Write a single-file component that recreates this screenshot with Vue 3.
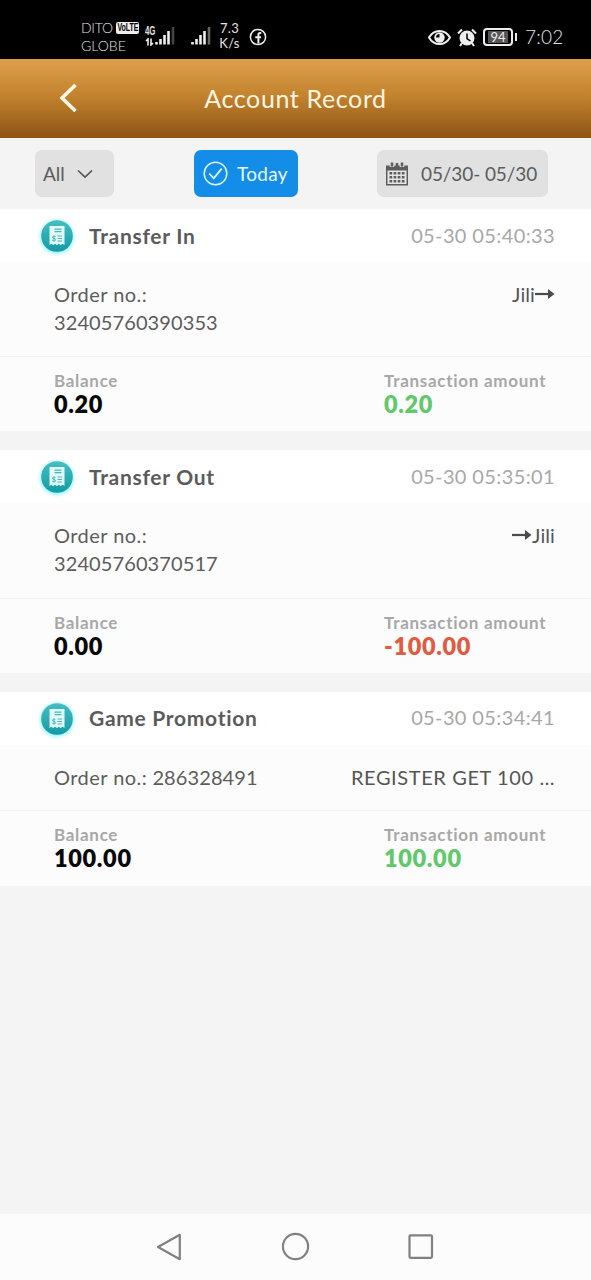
<script setup>
const records = [
  { title: 'Transfer In', time: '05-30 05:40:33', order: '32405760390353', wrap: true, detail: 'Jili', arrow: 'after', balance: '0.20', amount: '0.20', kind: 'gain', id: 'in' },
  { title: 'Transfer Out', time: '05-30 05:35:01', order: '32405760370517', wrap: true, detail: 'Jili', arrow: 'before', balance: '0.00', amount: '-100.00', kind: 'loss', id: 'out' },
  { title: 'Game Promotion', time: '05-30 05:34:41', order: '286328491', wrap: false, detail: 'REGISTER GET 100 …', arrow: '', balance: '100.00', amount: '100.00', kind: 'gain', id: 'promo' }
]
</script>

<template>
  <div class="screen">
    <div class="status">
      <div class="carrier">
        <div class="carrier-row"><span class="dito">DITO</span><span class="volte"><span>VoLTE</span></span></div>
        <div class="globe">GLOBE</div>
      </div>
      <div class="network">
        <span class="gen">4G</span>
        <svg class="updown" width="9" height="8" viewBox="0 0 9 8"><path d="M3 7.500V1L1 3M6 .5V7L8 5" fill="none" stroke="#eee" stroke-width="1.600" /></svg>
      </div>
      <svg class="signal" width="20" height="18" viewBox="0 0 20 18">
        <path d="M1.500 15v2.500M5.500 12v5.500M9.500 8v9.500M13.500 4v13.500" stroke="#eee" stroke-width="2.600" /><path d="M18 0v17.500" stroke="#444" stroke-width="2.600" />
      </svg>
      <svg class="signal second" width="20" height="18" viewBox="0 0 20 18">
        <path d="M1.500 15v2.500M5.500 12v5.500M9.500 8v9.500M13.500 4v13.500" stroke="#eee" stroke-width="2.600" /><path d="M18 0v17.500" stroke="#666" stroke-width="2.600" />
      </svg>
      <div class="speed"><div>7.3</div><div>K/s</div></div>
      <svg class="fb" width="18" height="18" viewBox="0 0 18 18" fill="none" stroke="#eee">
        <circle cx="9" cy="9" r="7.600" stroke-width="1.500" /><path d="M12.300 4.900h-1.200c-1.300 0-1.700.7-1.700 1.900V15.500M6.200 9.300h5.800" stroke-width="2" />
      </svg>
      <div class="status-right">
        <svg width="23" height="17" viewBox="0 0 23 17">
          <path d="M1 8.500C6-.3 17-.3 22 8.500 17 17.300 6 17.300 1 8.500Z" fill="none" stroke="#eee" stroke-width="2" />
          <circle cx="11.500" cy="8.500" r="5.200" fill="#eee" /><path d="M11.500 5v3.500H8A3.500 3.500 0 0 1 11.500 5Z" fill="#000" />
        </svg>
        <svg width="20" height="19" viewBox="0 0 20 19">
          <circle cx="10" cy="10" r="7.500" fill="#eee" />
          <path d="M1 5.500 5 1.500M19 5.500 15 1.500M5 15l-2 3M15 15l2 3" stroke="#eee" stroke-width="2" />
          <path d="M10 5.500v5l3.500 2.500" fill="none" stroke="#000" stroke-width="1.500" />
        </svg>
        <div class="battery"><span>94</span></div>
        <div class="clock">7:02</div>
      </div>
    </div>

    <header class="titlebar">
      <svg class="back" width="20" height="30" viewBox="0 0 20 30"><path d="M17.500 2 4 15l13.500 13" fill="none" stroke="#fff7e6" stroke-width="3.600" /></svg>
      <h1>Account Record</h1>
    </header>

    <div class="filters">
      <div class="pill all"><span>All</span>
        <svg width="16" height="10" viewBox="0 0 16 10"><path d="m1 1.500 7 6.500 7-6.500" fill="none" stroke="#555" stroke-width="1.700" /></svg>
      </div>
      <div class="pill today">
        <svg width="25" height="25" viewBox="0 0 25 25" fill="none" stroke="#d9fbff"><circle cx="12.500" cy="12.500" r="11.300" stroke-width="1.500" /><path d="m6.200 12.500 4.500 4.800 8-9.600" stroke-width="1.800" /></svg>
        <span>Today</span>
      </div>
      <div class="pill range">
        <svg width="22" height="24" viewBox="0 0 22 24">
          <path d="M0 3.500h22V23.500H0Z" fill="#5d5d5d" /><path d="M1.500 8.500h19v13.500h-19Z" fill="#e6e6e6" />
          <path d="M6 .5v4.500M16 .5v4.500" stroke="#e1e1e1" stroke-width="4.500" /><path d="M6 .5v4M11 1v4M16 .5v4" stroke="#5d5d5d" stroke-width="2.500" />
          <path d="M3.500 11.200h15M3.500 15.200h15M3.500 19.200h15" stroke="#5d5d5d" stroke-width="2.400" stroke-dasharray="2.700 1.400" />
        </svg>
        <span>05/30- 05/30</span>
      </div>
    </div>

    <main>
      <section v-for="r in records" :key="r.id" class="record" :class="r.id">
        <div class="head">
          <svg class="receipt" width="44" height="44" viewBox="0 0 44 44">
            <defs>
              <linearGradient :id="'teal-' + r.id" x1="0" y1="0" x2="0" y2="1"><stop offset="0" stop-color="#45bfc1" /><stop offset="1" stop-color="#149aa5" /></linearGradient>
              <radialGradient :id="'glow-' + r.id"><stop offset=".7" stop-color="#6ff0fb" stop-opacity=".8" /><stop offset="1" stop-color="#a8faff" stop-opacity="0" /></radialGradient>
            </defs>
            <circle cx="22" cy="23" r="20" :fill="'url(#glow-' + r.id + ')'" />
            <circle cx="22" cy="22" r="15.800" :fill="'url(#teal-' + r.id + ')'" />
            <path d="M14.500 12h15v19l-1.900-1.300-1.900 1.300-1.900-1.300-1.800 1.300-1.900-1.300-1.900 1.300-1.900-1.300-1.800 1.300Z" fill="#e2fbfb" />
            <path d="M19.500 15.200h7M19.500 17.700h7M22.500 22h4.500M22.500 24.500h4.500M22.500 27h4.500" stroke="#48b5ba" stroke-width="1.200" />
            <path d="M20.500 22.700c-1-.8-3-.6-3 .7 0 1.500 3.100.7 3.100 2.200 0 1.400-2.200 1.500-3.300.6M19 21.500v6" fill="none" stroke="#48b5ba" stroke-width="1" />
          </svg>
          <h2>{{ r.title }}</h2>
          <time>{{ r.time }}</time>
        </div>
        <div class="body">
          <div class="order"><span class="order-label">Order no.:</span><br v-if="r.wrap"><template v-else>&nbsp;</template><span>{{ r.order }}</span></div>
          <div class="detail">
            <svg v-if="r.arrow === 'before'" width="20" height="12" viewBox="0 0 20 12"><path d="M0 6h16" stroke="#4b4b4b" stroke-width="2.200" /><path d="m13 1 6.500 5-6.500 5Z" fill="#4b4b4b" /></svg>
            <span>{{ r.detail }}</span>
            <svg v-if="r.arrow === 'after'" width="20" height="12" viewBox="0 0 20 12"><path d="M0 6h16" stroke="#4b4b4b" stroke-width="2.200" /><path d="m13 1 6.500 5-6.500 5Z" fill="#4b4b4b" /></svg>
          </div>
        </div>
        <div class="foot">
          <div class="balance"><div class="label">Balance</div><div class="value">{{ r.balance }}</div></div>
          <div class="amount"><div class="label wide">Transaction amount</div><div class="value" :class="r.kind">{{ r.amount }}</div></div>
        </div>
      </section>
    </main>

    <nav>
      <svg width="28" height="30" viewBox="0 0 28 30"><path d="M23.800 2.800v24.400L2 15Z" fill="none" stroke="#808080" stroke-width="2.200" stroke-linejoin="round" /></svg>
      <svg width="28" height="30" viewBox="0 0 28 30"><circle cx="13.500" cy="14.500" r="12.600" fill="none" stroke="#808080" stroke-width="2.200" /></svg>
      <svg width="28" height="30" viewBox="0 0 28 30"><rect x="2.500" y="3.300" width="22.500" height="22.500" rx="1" fill="none" stroke="#808080" stroke-width="2.200" /></svg>
    </nav>
  </div>
</template>

<style>
body { margin: 0; background: #f4f4f4; }
</style>

<style scoped>
.screen { width: 591px; height: 1280px; display: flex; flex-direction: column; overflow: hidden; background: #f4f4f4; font-family: Lato, "Noto Sans", sans-serif; font-variant-ligatures: none; color: #5c5c5c; }
.screen * { box-sizing: border-box; }
svg { display: block; flex: none; }
.status { height: 59px; flex: none; background: #000; color: #e2e2e2; display: flex; align-items: flex-start; padding-left: 81px; white-space: nowrap; }
.carrier { width: 60px; padding-top: 19px; font-size: 14px; line-height: 18px; font-weight: 300; }
.carrier-row { display: flex; align-items: center; gap: 4px; }
.dito { width: 31px; letter-spacing: -.3px; }
.volte { width: 23px; height: 12px; border-radius: 2px; background: #eee; color: #000; font: bold 10px/12px "Liberation Sans", sans-serif; }
.volte span { display: block; width: 31px; padding-left: 2px; transform: scaleX(.7); transform-origin: left; }
.network { width: 14px; padding: 25px 0 0 4px; height: 50px; }
.gen { display: block; font: bold 12px/12px "Liberation Sans", sans-serif; transform: scaleX(.65); transform-origin: left; }
.updown { margin-top: 1px; }
.signal { margin: 27px 0 0 0; }
.second { margin-left: 16px; }
.speed { width: 29px; padding-top: 21px; margin-left: 4px; text-align: center; font-size: 13px; line-height: 15px; letter-spacing: .3px; }
.fb { margin: 28px 0 0 5px; }
.status-right { margin-left: auto; padding: 27px 27px 0 0; display: flex; align-items: center; gap: 6px; }
.battery { position: relative; width: 30px; height: 18px; border: 2px solid #eee; border-radius: 4px; padding: 1px; font-size: 13px; line-height: 12px; text-align: center; }
.battery span { display: block; width: 20px; height: 12px; margin-left: 2px; background: #555; color: #eee; }
.battery::after { content: ""; position: absolute; right: -6px; top: 3px; width: 2px; height: 8px; background: #eee; }
.clock { width: 39px; margin-left: 6px; font-size: 19px; line-height: 20px; font-weight: 300; letter-spacing: .2px; }
.titlebar { height: 79px; flex: none; display: grid; grid-template-columns: 100px 1fr 100px; align-items: center; background: linear-gradient(#dda04a, #c4842f 45%, #8d5414); }
.back { margin: -2px 0 0 58px; }
h1 { margin: -1px 0 0; font-size: 25px; line-height: 32px; font-weight: 400; text-align: center; letter-spacing: .62px; color: #fff6e2; }
.filters { height: 71px; flex: none; display: flex; justify-content: space-between; padding: 12px 43px 12px 35px; }
.pill { height: 47px; border-radius: 7px; background: #e1e1e1; display: flex; align-items: center; font-size: 19px; white-space: nowrap; }
.all { width: 79px; padding-left: 8px; gap: 12px; }
.today { width: 104px; margin-left: 1px; padding-left: 9px; gap: 9px; background: #148de9; color: #e5fbff; letter-spacing: .3px; }
.today svg { margin-top: -1px; }
.range { width: 171px; padding-left: 9px; gap: 13px; letter-spacing: -.1px; }
.record { margin-bottom: 19px; background: #fcfcfc; }
.head { height: 53px; display: flex; align-items: center; padding: 1px 36px 0 35px; background: #fff; }
h2 { margin: 0 0 0 10px; font-size: 21px; line-height: 28px; font-weight: 700; letter-spacing: .7px; color: #5b5b5b; }
time { margin: -2px 0 0 auto; font-size: 20px; line-height: 28px; letter-spacing: .38px; color: #a8a8a8; }
.promo h2 { margin-top: -2px; }
.promo time { margin-top: -4px; }
.promo .receipt { margin-top: -1px; }
.body { height: 96px; display: flex; justify-content: space-between; padding: 18px 36px 0 54px; font-size: 20px; line-height: 28px; letter-spacing: .1px; border-bottom: 1px solid #f4f4f4; }
.in .body { height: 95px; }
.promo .body { height: 66px; }
.order-label { letter-spacing: .45px; }
.detail { display: flex; align-items: center; height: 28px; color: #555; }
.promo .detail { letter-spacing: .6px; }
.foot { height: 74px; display: flex; padding: 13px 0 0 54px; }
.promo .foot { height: 75px; }
.balance { width: 330px; }
.label { font-size: 17px; line-height: 21px; font-weight: 700; letter-spacing: .7px; color: #a8a8a8; white-space: nowrap; }
.label.wide { letter-spacing: .72px; }
.value { font-size: 23.500px; line-height: 27px; font-weight: 800; letter-spacing: .65px; color: #080808; }
.value.gain { color: #61c86b; }
.value.loss { color: #df5c43; }
nav { height: 66px; flex: none; margin-top: auto; background: #fcfcfc; display: flex; justify-content: space-between; align-items: center; padding: 0 156px; }
</style>
